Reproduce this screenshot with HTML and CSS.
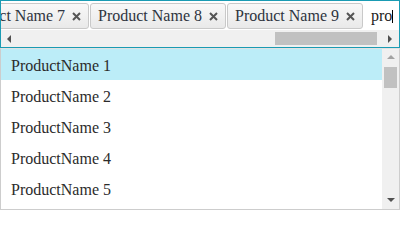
FILE: index.html
```html
<!DOCTYPE html>
<html>
<head>
<meta charset="utf-8">
<link rel="stylesheet" href="styles.css">
</head>
<body>
<div class="multiselect">
  <div class="input-box">
    <div class="tags-row">
      <span class="tag"><span class="tag-text">Product Name 7</span><svg class="x" width="9" height="9" viewBox="0 0 9 9"><path d="M1 1L8 8M8 1L1 8" /></svg></span>
      <span class="tag"><span class="tag-text">Product Name 8</span><svg class="x" width="9" height="9" viewBox="0 0 9 9"><path d="M1 1L8 8M8 1L1 8" /></svg></span>
      <span class="tag"><span class="tag-text">Product Name 9</span><svg class="x" width="9" height="9" viewBox="0 0 9 9"><path d="M1 1L8 8M8 1L1 8" /></svg></span>
      <span class="search">pro<span class="caret"></span></span>
    </div>
    <div class="hscroll">
      <span class="sbtn"><svg width="5" height="8" viewBox="0 0 5 8"><polygon points="4,0 4,8 0,4" class="dark"/></svg></span>
      <span class="htrack"><span class="hthumb"></span></span>
      <span class="sbtn"><svg width="5" height="8" viewBox="0 0 5 8"><polygon points="0,0 0,8 4,4" class="dark"/></svg></span>
    </div>
  </div>
  <div class="list-box">
    <ul class="items">
      <li class="item focused">ProductName 1</li>
      <li class="item">ProductName 2</li>
      <li class="item">ProductName 3</li>
      <li class="item">ProductName 4</li>
      <li class="item">ProductName 5</li>
    </ul>
    <div class="vscroll">
      <span class="vbtn"><svg width="8" height="5" viewBox="0 0 8 5"><polygon points="0,4 8,4 4,0" class="light"/></svg></span>
      <span class="vtrack"><span class="vthumb"></span></span>
      <span class="vbtn"><svg width="8" height="5" viewBox="0 0 8 5"><polygon points="0,0 8,0 4,4" class="dark"/></svg></span>
    </div>
  </div>
</div>
</body>
</html>
```
FILE: styles.css
```css
html, body {
  margin: 0;
  padding: 0;
  background: #ffffff;
}
.multiselect {
  width: 400px;
  height: 210px;
  font-family: "Liberation Serif", "Times New Roman", serif;
  font-size: 16px;
  color: #2b2b2b;
  display: flex;
  flex-direction: column;
  overflow: hidden;
}
.input-box {
  border: 1px solid #1a9bb3;
  display: flex;
  flex-direction: column;
}
.tags-row {
  height: 29px;
  box-sizing: border-box;
  padding-top: 2px;
  display: flex;
  justify-content: flex-end;
  align-items: flex-start;
  overflow: hidden;
  white-space: nowrap;
}
.tag {
  flex: none;
  display: flex;
  align-items: center;
  height: 26px;
  box-sizing: border-box;
  border: 1px solid #c9c9c9;
  border-radius: 3px;
  background: linear-gradient(#f8f8f8, #e9e9e9);
  padding: 0 7px 0 7px;
  margin-left: 1px;
  color: #2e3440;
  line-height: 24px;
}
.tag-text {
  margin-right: 7px;
}
.x {
  display: block;
}
.x path {
  stroke: #555555;
  stroke-width: 2;
  fill: none;
}
.search {
  flex: none;
  width: 28px;
  margin-left: 8px;
  height: 26px;
  line-height: 26px;
  display: flex;
  align-items: center;
  color: #1c1c1c;
}
.caret {
  display: inline-block;
  width: 1px;
  height: 13px;
  background: #000000;
}
.hscroll {
  height: 17px;
  background: #f0f0f0;
  display: flex;
  align-items: stretch;
}
.sbtn {
  width: 17px;
  flex: none;
  display: flex;
  align-items: center;
  justify-content: center;
}
.htrack {
  flex: 1;
  display: flex;
  align-items: center;
  justify-content: flex-end;
}
.hthumb {
  width: 102px;
  height: 13px;
  background: #c1c1c1;
  margin-right: 5px;
}
.dark {
  fill: #505050;
}
.light {
  fill: #a3a3a3;
}
.list-box {
  flex: 1;
  min-height: 0;
  border: 1px solid #cdcdcd;
  border-top: 1px solid #e2e2e2;
  display: flex;
}
.items {
  flex: 1;
  list-style: none;
  margin: 0;
  padding: 0;
  overflow: hidden;
}
.item {
  height: 31px;
  line-height: 33px;
  padding: 0 10px;
  box-sizing: border-box;
}
.item.focused {
  background: #bcedf8;
}
.vscroll {
  width: 17px;
  flex: none;
  background: #f0f0f0;
  display: flex;
  flex-direction: column;
}
.vbtn {
  height: 17px;
  flex: none;
  display: flex;
  align-items: center;
  justify-content: center;
}
.vtrack {
  flex: 1;
  display: flex;
  justify-content: center;
}
.vthumb {
  width: 13px;
  height: 21px;
  background: #c1c1c1;
  margin-top: 1px;
}
```
